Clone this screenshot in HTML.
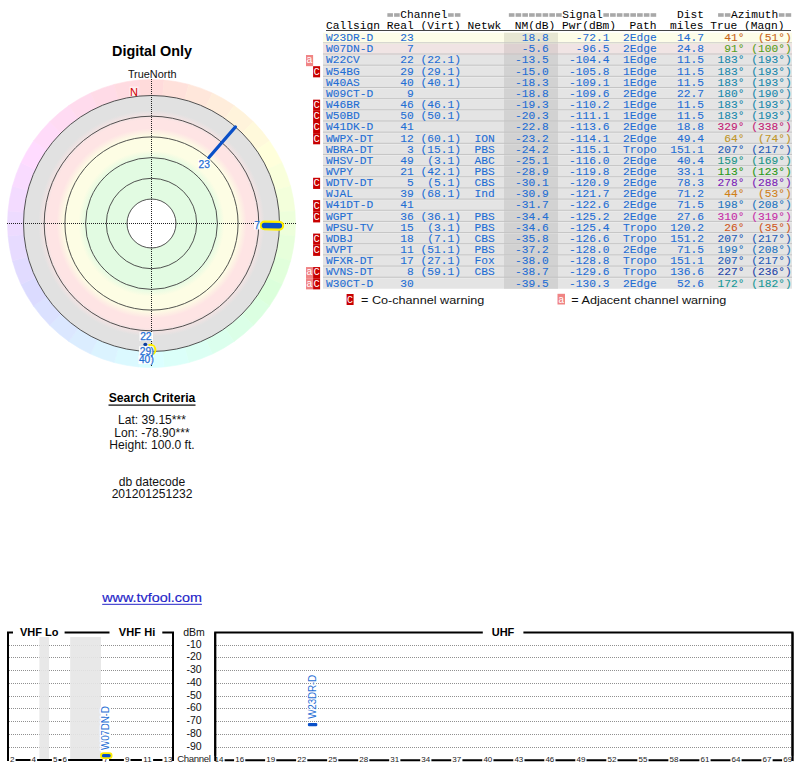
<!DOCTYPE html><html><head><meta charset="utf-8"><style>html,body{margin:0;padding:0;background:#fff;width:800px;height:768px;overflow:hidden}svg{position:absolute;left:0;top:0;display:block}</style></head><body>
<svg width="800" height="768" viewBox="0 0 800 768" style="font-family:'Liberation Sans', sans-serif">
<defs><radialGradient id="rg" gradientUnits="userSpaceOnUse" cx="151.5" cy="223.5" r="128">
<stop offset="0.0000" stop-color="#e2fbe2"/>
<stop offset="0.5078" stop-color="#e2fbe2"/>
<stop offset="0.5703" stop-color="#fdfde4"/>
<stop offset="0.6797" stop-color="#fdfde4"/>
<stop offset="0.7422" stop-color="#fee4e4"/>
<stop offset="0.8125" stop-color="#fee4e4"/>
<stop offset="0.8828" stop-color="#e1e1e1"/>
<stop offset="1.0000" stop-color="#e1e1e1"/>
</radialGradient></defs>
<path d="M138.95,80.05 A144,144 0 0 1 164.05,80.05 L162.66,95.99 A128,128 0 0 0 140.34,95.99Z" fill="#ffdbdb" stroke="#ffdbdb" stroke-width="0.6"/>
<path d="M164.05,80.05 A144,144 0 0 1 188.77,84.41 L184.63,99.86 A128,128 0 0 0 162.66,95.99Z" fill="#ffe1db" stroke="#ffe1db" stroke-width="0.6"/>
<path d="M188.77,84.41 A144,144 0 0 1 212.36,92.99 L205.60,107.49 A128,128 0 0 0 184.63,99.86Z" fill="#ffe7db" stroke="#ffe7db" stroke-width="0.6"/>
<path d="M212.36,92.99 A144,144 0 0 1 234.10,105.54 L224.92,118.65 A128,128 0 0 0 205.60,107.49Z" fill="#ffeddb" stroke="#ffeddb" stroke-width="0.6"/>
<path d="M234.10,105.54 A144,144 0 0 1 253.32,121.68 L242.01,132.99 A128,128 0 0 0 224.92,118.65Z" fill="#fff3db" stroke="#fff3db" stroke-width="0.6"/>
<path d="M253.32,121.68 A144,144 0 0 1 269.46,140.90 L256.35,150.08 A128,128 0 0 0 242.01,132.99Z" fill="#fff9db" stroke="#fff9db" stroke-width="0.6"/>
<path d="M269.46,140.90 A144,144 0 0 1 282.01,162.64 L267.51,169.40 A128,128 0 0 0 256.35,150.08Z" fill="#ffffdb" stroke="#ffffdb" stroke-width="0.6"/>
<path d="M282.01,162.64 A144,144 0 0 1 290.59,186.23 L275.14,190.37 A128,128 0 0 0 267.51,169.40Z" fill="#f9ffdb" stroke="#f9ffdb" stroke-width="0.6"/>
<path d="M290.59,186.23 A144,144 0 0 1 294.95,210.95 L279.01,212.34 A128,128 0 0 0 275.14,190.37Z" fill="#f3ffdb" stroke="#f3ffdb" stroke-width="0.6"/>
<path d="M294.95,210.95 A144,144 0 0 1 294.95,236.05 L279.01,234.66 A128,128 0 0 0 279.01,212.34Z" fill="#edffdb" stroke="#edffdb" stroke-width="0.6"/>
<path d="M294.95,236.05 A144,144 0 0 1 290.59,260.77 L275.14,256.63 A128,128 0 0 0 279.01,234.66Z" fill="#e7ffdb" stroke="#e7ffdb" stroke-width="0.6"/>
<path d="M290.59,260.77 A144,144 0 0 1 282.01,284.36 L267.51,277.60 A128,128 0 0 0 275.14,256.63Z" fill="#e1ffdb" stroke="#e1ffdb" stroke-width="0.6"/>
<path d="M282.01,284.36 A144,144 0 0 1 269.46,306.10 L256.35,296.92 A128,128 0 0 0 267.51,277.60Z" fill="#dbffdb" stroke="#dbffdb" stroke-width="0.6"/>
<path d="M269.46,306.10 A144,144 0 0 1 253.32,325.32 L242.01,314.01 A128,128 0 0 0 256.35,296.92Z" fill="#dbffe1" stroke="#dbffe1" stroke-width="0.6"/>
<path d="M253.32,325.32 A144,144 0 0 1 234.10,341.46 L224.92,328.35 A128,128 0 0 0 242.01,314.01Z" fill="#dbffe7" stroke="#dbffe7" stroke-width="0.6"/>
<path d="M234.10,341.46 A144,144 0 0 1 212.36,354.01 L205.60,339.51 A128,128 0 0 0 224.92,328.35Z" fill="#dbffed" stroke="#dbffed" stroke-width="0.6"/>
<path d="M212.36,354.01 A144,144 0 0 1 188.77,362.59 L184.63,347.14 A128,128 0 0 0 205.60,339.51Z" fill="#dbfff3" stroke="#dbfff3" stroke-width="0.6"/>
<path d="M188.77,362.59 A144,144 0 0 1 164.05,366.95 L162.66,351.01 A128,128 0 0 0 184.63,347.14Z" fill="#dbfff9" stroke="#dbfff9" stroke-width="0.6"/>
<path d="M164.05,366.95 A144,144 0 0 1 138.95,366.95 L140.34,351.01 A128,128 0 0 0 162.66,351.01Z" fill="#dbffff" stroke="#dbffff" stroke-width="0.6"/>
<path d="M138.95,366.95 A144,144 0 0 1 114.23,362.59 L118.37,347.14 A128,128 0 0 0 140.34,351.01Z" fill="#dbf9ff" stroke="#dbf9ff" stroke-width="0.6"/>
<path d="M114.23,362.59 A144,144 0 0 1 90.64,354.01 L97.40,339.51 A128,128 0 0 0 118.37,347.14Z" fill="#dbf3ff" stroke="#dbf3ff" stroke-width="0.6"/>
<path d="M90.64,354.01 A144,144 0 0 1 68.90,341.46 L78.08,328.35 A128,128 0 0 0 97.40,339.51Z" fill="#dbedff" stroke="#dbedff" stroke-width="0.6"/>
<path d="M68.90,341.46 A144,144 0 0 1 49.68,325.32 L60.99,314.01 A128,128 0 0 0 78.08,328.35Z" fill="#dbe7ff" stroke="#dbe7ff" stroke-width="0.6"/>
<path d="M49.68,325.32 A144,144 0 0 1 33.54,306.10 L46.65,296.92 A128,128 0 0 0 60.99,314.01Z" fill="#dbe1ff" stroke="#dbe1ff" stroke-width="0.6"/>
<path d="M33.54,306.10 A144,144 0 0 1 20.99,284.36 L35.49,277.60 A128,128 0 0 0 46.65,296.92Z" fill="#dbdbff" stroke="#dbdbff" stroke-width="0.6"/>
<path d="M20.99,284.36 A144,144 0 0 1 12.41,260.77 L27.86,256.63 A128,128 0 0 0 35.49,277.60Z" fill="#e1dbff" stroke="#e1dbff" stroke-width="0.6"/>
<path d="M12.41,260.77 A144,144 0 0 1 8.05,236.05 L23.99,234.66 A128,128 0 0 0 27.86,256.63Z" fill="#e7dbff" stroke="#e7dbff" stroke-width="0.6"/>
<path d="M8.05,236.05 A144,144 0 0 1 8.05,210.95 L23.99,212.34 A128,128 0 0 0 23.99,234.66Z" fill="#eddbff" stroke="#eddbff" stroke-width="0.6"/>
<path d="M8.05,210.95 A144,144 0 0 1 12.41,186.23 L27.86,190.37 A128,128 0 0 0 23.99,212.34Z" fill="#f3dbff" stroke="#f3dbff" stroke-width="0.6"/>
<path d="M12.41,186.23 A144,144 0 0 1 20.99,162.64 L35.49,169.40 A128,128 0 0 0 27.86,190.37Z" fill="#f9dbff" stroke="#f9dbff" stroke-width="0.6"/>
<path d="M20.99,162.64 A144,144 0 0 1 33.54,140.90 L46.65,150.08 A128,128 0 0 0 35.49,169.40Z" fill="#ffdbff" stroke="#ffdbff" stroke-width="0.6"/>
<path d="M33.54,140.90 A144,144 0 0 1 49.68,121.68 L60.99,132.99 A128,128 0 0 0 46.65,150.08Z" fill="#ffdbf9" stroke="#ffdbf9" stroke-width="0.6"/>
<path d="M49.68,121.68 A144,144 0 0 1 68.90,105.54 L78.08,118.65 A128,128 0 0 0 60.99,132.99Z" fill="#ffdbf3" stroke="#ffdbf3" stroke-width="0.6"/>
<path d="M68.90,105.54 A144,144 0 0 1 90.64,92.99 L97.40,107.49 A128,128 0 0 0 78.08,118.65Z" fill="#ffdbed" stroke="#ffdbed" stroke-width="0.6"/>
<path d="M90.64,92.99 A144,144 0 0 1 114.23,84.41 L118.37,99.86 A128,128 0 0 0 97.40,107.49Z" fill="#ffdbe7" stroke="#ffdbe7" stroke-width="0.6"/>
<path d="M114.23,84.41 A144,144 0 0 1 138.95,80.05 L140.34,95.99 A128,128 0 0 0 118.37,99.86Z" fill="#ffdbe1" stroke="#ffdbe1" stroke-width="0.6"/>
<circle cx="151.5" cy="223.5" r="128" fill="url(#rg)"/>
<circle cx="151.5" cy="223.5" r="24.5" fill="#fff" stroke="#404040" stroke-width="0.9"/>
<circle cx="151.5" cy="223.5" r="45.2" fill="none" stroke="#404040" stroke-width="0.9"/>
<circle cx="151.5" cy="223.5" r="65.9" fill="none" stroke="#404040" stroke-width="0.9"/>
<circle cx="151.5" cy="223.5" r="86.6" fill="none" stroke="#404040" stroke-width="0.9"/>
<circle cx="151.5" cy="223.5" r="107.3" fill="none" stroke="#404040" stroke-width="0.9"/>
<circle cx="151.5" cy="223.5" r="128" fill="none" stroke="#404040" stroke-width="0.9"/>
<line x1="7" y1="223.5" x2="296" y2="223.5" stroke="#222" stroke-width="1" stroke-dasharray="1,1"/>
<line x1="151.5" y1="79" x2="151.5" y2="367" stroke="#222" stroke-width="1" stroke-dasharray="1,1"/>
<text x="152" y="55.6" text-anchor="middle" font-weight="bold" font-size="14.4" fill="#000">Digital Only</text>
<text x="152.2" y="77.8" text-anchor="middle" font-size="10.9" fill="#111">TrueNorth</text>
<rect x="129.5" y="86.5" width="9" height="9.5" fill="#fff" opacity="0.5"/>
<text x="134" y="95.6" text-anchor="middle" font-size="11" fill="#d00000">N</text>
<line x1="208.91" y1="157.46" x2="235.48" y2="126.90" stroke="#0a50c8" stroke-width="3.2" stroke-linecap="round"/>
<rect x="198" y="159.5" width="12.5" height="9" fill="#fff" opacity="0.92"/>
<text x="204.2" y="167.7" text-anchor="middle" font-size="10.2" fill="#1f6ed4" stroke="#1f6ed4" stroke-width="0.25">23</text>
<line x1="264.48" y1="225.47" x2="279.28" y2="225.73" stroke="#ffee00" stroke-width="9.8" stroke-linecap="round"/>
<line x1="264.48" y1="225.47" x2="279.28" y2="225.73" stroke="#0a50c8" stroke-width="5.6" stroke-linecap="round"/>
<rect x="254" y="221" width="6" height="8.5" fill="#fff" opacity="0.92"/>
<text x="257.2" y="228.6" text-anchor="middle" font-size="10.2" fill="#1f6ed4" stroke="#1f6ed4" stroke-width="0.25">7</text>
<path d="M148.5,345.2 A5,5 0 0 1 152.2,354.6" fill="none" stroke="#ffee00" stroke-width="2"/>
<rect x="139.5" y="332" width="13.5" height="9" fill="#fff" opacity="0.92"/>
<text x="145.8" y="340" text-anchor="middle" font-size="10.2" fill="#1f6ed4" stroke="#1f6ed4" stroke-width="0.25">22</text>
<ellipse cx="145.3" cy="344.4" rx="2" ry="1.6" fill="#0a3c9c"/>
<rect x="139" y="346.3" width="14.5" height="9" fill="#fff" opacity="0.92"/>
<text x="145.4" y="354.5" text-anchor="middle" font-size="10.2" fill="#1f6ed4" stroke="#1f6ed4" stroke-width="0.25">29</text>
<rect x="138.5" y="355.5" width="15.5" height="8.5" fill="#fff" opacity="0.92"/>
<text x="144.6" y="362.8" text-anchor="middle" font-size="10.2" fill="#1f6ed4" stroke="#1f6ed4" stroke-width="0.25">40</text>
<text x="152.3" y="362.8" text-anchor="middle" font-size="10.2" fill="#1f6ed4" stroke="#1f6ed4" stroke-width="0.25">)</text>
<text x="152.3" y="354.5" text-anchor="middle" font-size="10.2" fill="#1f6ed4" stroke="#1f6ed4" stroke-width="0.25">)</text>
<text x="152" y="401.9" text-anchor="middle" font-weight="bold" font-size="12.2" fill="#000">Search Criteria</text>
<rect x="108.5" y="404.5" width="87" height="1.2" fill="#000"/>
<text x="152" y="423.5" text-anchor="middle" font-size="12.1" fill="#111">Lat: 39.15***</text>
<text x="152" y="436.6" text-anchor="middle" font-size="12.1" fill="#111">Lon: -78.90***</text>
<text x="152" y="448.9" text-anchor="middle" font-size="12.1" fill="#111">Height: 100.0 ft.</text>
<text x="152" y="486" text-anchor="middle" font-size="12.1" fill="#111">db datecode</text>
<text x="152" y="497.6" text-anchor="middle" font-size="12.1" fill="#111">201201251232</text>
<text x="102.2" y="602" font-size="12.4" fill="#2424c8" stroke="#2424c8" stroke-width="0.15" transform="translate(102.2 0) scale(1.16 1) translate(-102.2 0)">www.tvfool.com</text>
<rect x="102.2" y="603.8" width="99.7" height="1" fill="#2424c8"/>
<g font-family='"Liberation Mono", monospace' font-size="11.25" stroke-width="0.1">
<text x="400.25" y="18" fill="#000" transform="translate(0 18) scale(1 1.03) translate(0 -18)">Channel</text>
<text x="562.25" y="18" fill="#000" transform="translate(0 18) scale(1 1.03) translate(0 -18)">Signal</text>
<text x="677.0" y="18" fill="#000" transform="translate(0 18) scale(1 1.03) translate(0 -18)">Dist</text>
<text x="731.0" y="18" fill="#000" transform="translate(0 18) scale(1 1.03) translate(0 -18)">Azimuth</text>
<rect x="387.35" y="13.2" width="5.6" height="3.6" fill="#a8a8a8"/>
<rect x="394.10" y="13.2" width="5.6" height="3.6" fill="#a8a8a8"/>
<rect x="448.10" y="13.2" width="5.6" height="3.6" fill="#a8a8a8"/>
<rect x="454.85" y="13.2" width="5.6" height="3.6" fill="#a8a8a8"/>
<rect x="508.85" y="13.2" width="5.6" height="3.6" fill="#a8a8a8"/>
<rect x="515.60" y="13.2" width="5.6" height="3.6" fill="#a8a8a8"/>
<rect x="522.35" y="13.2" width="5.6" height="3.6" fill="#a8a8a8"/>
<rect x="529.10" y="13.2" width="5.6" height="3.6" fill="#a8a8a8"/>
<rect x="535.85" y="13.2" width="5.6" height="3.6" fill="#a8a8a8"/>
<rect x="542.60" y="13.2" width="5.6" height="3.6" fill="#a8a8a8"/>
<rect x="549.35" y="13.2" width="5.6" height="3.6" fill="#a8a8a8"/>
<rect x="556.10" y="13.2" width="5.6" height="3.6" fill="#a8a8a8"/>
<rect x="603.35" y="13.2" width="5.6" height="3.6" fill="#a8a8a8"/>
<rect x="610.10" y="13.2" width="5.6" height="3.6" fill="#a8a8a8"/>
<rect x="616.85" y="13.2" width="5.6" height="3.6" fill="#a8a8a8"/>
<rect x="623.60" y="13.2" width="5.6" height="3.6" fill="#a8a8a8"/>
<rect x="630.35" y="13.2" width="5.6" height="3.6" fill="#a8a8a8"/>
<rect x="637.10" y="13.2" width="5.6" height="3.6" fill="#a8a8a8"/>
<rect x="643.85" y="13.2" width="5.6" height="3.6" fill="#a8a8a8"/>
<rect x="650.60" y="13.2" width="5.6" height="3.6" fill="#a8a8a8"/>
<rect x="718.10" y="13.2" width="5.6" height="3.6" fill="#a8a8a8"/>
<rect x="724.85" y="13.2" width="5.6" height="3.6" fill="#a8a8a8"/>
<rect x="778.85" y="13.2" width="5.6" height="3.6" fill="#a8a8a8"/>
<rect x="785.60" y="13.2" width="5.6" height="3.6" fill="#a8a8a8"/>
<text x="326.0" y="29" fill="#000" xml:space="preserve" transform="translate(0 29) scale(1 1.03) translate(0 -29)">Callsign Real (Virt) Netwk  NM(dB) Pwr(dBm)  Path  miles True (Magn)</text>
<rect x="326" y="30" width="465" height="1" fill="#444"/>
<rect x="323" y="32.70" width="469" height="11.16" fill="#fdfde8"/>
<rect x="504" y="32.70" width="54" height="11.16" fill="#e6e6d2"/>
<rect x="323" y="42.34" width="469" height="1" fill="#c4c4c4"/>
<text y="41.10" fill="#1f6ed4" stroke="#1f6ed4" transform="translate(0 41.10) scale(1 1.03) translate(0 -41.10)"><tspan x="326.0">W23DR-D</tspan><tspan x="413.75" text-anchor="end">23</tspan><tspan x="548.75" text-anchor="end">18.8</tspan><tspan x="609.5" text-anchor="end">-72.1</tspan><tspan x="623.0">2Edge</tspan><tspan x="704.0" text-anchor="end">14.7</tspan></text>
<text y="41.10" fill="#c8661a" stroke="#c8661a" transform="translate(0 41.10) scale(1 1.03) translate(0 -41.10)"><tspan x="744.5" text-anchor="end">41°</tspan><tspan x="791.75" text-anchor="end">(51°)</tspan></text>
<rect x="323" y="43.86" width="469" height="11.16" fill="#f0e4e4"/>
<rect x="504" y="43.86" width="54" height="11.16" fill="#ddd1d1"/>
<rect x="323" y="53.50" width="469" height="1" fill="#c4c4c4"/>
<text y="52.26" fill="#1f6ed4" stroke="#1f6ed4" transform="translate(0 52.26) scale(1 1.03) translate(0 -52.26)"><tspan x="326.0">W07DN-D</tspan><tspan x="413.75" text-anchor="end">7</tspan><tspan x="548.75" text-anchor="end">-5.6</tspan><tspan x="609.5" text-anchor="end">-96.5</tspan><tspan x="623.0">2Edge</tspan><tspan x="704.0" text-anchor="end">24.8</tspan></text>
<text y="52.26" fill="#58a01a" stroke="#58a01a" transform="translate(0 52.26) scale(1 1.03) translate(0 -52.26)"><tspan x="744.5" text-anchor="end">91°</tspan><tspan x="791.75" text-anchor="end">(100°)</tspan></text>
<rect x="323" y="55.02" width="469" height="11.16" fill="#e4e4e4"/>
<rect x="504" y="55.02" width="54" height="11.16" fill="#d2d2d2"/>
<rect x="323" y="64.66" width="469" height="1" fill="#c4c4c4"/>
<rect x="306" y="55.02" width="7.1" height="11.16" fill="#f08484"/>
<text x="309.5" y="63.42" text-anchor="middle" fill="#fff" font-size="10.5">a</text>
<text y="63.42" fill="#1f6ed4" stroke="#1f6ed4" transform="translate(0 63.42) scale(1 1.03) translate(0 -63.42)"><tspan x="326.0">W22CV</tspan><tspan x="413.75" text-anchor="end">22</tspan><tspan x="461.0" text-anchor="end">(22.1)</tspan><tspan x="548.75" text-anchor="end">-13.5</tspan><tspan x="609.5" text-anchor="end">-104.4</tspan><tspan x="623.0">1Edge</tspan><tspan x="704.0" text-anchor="end">11.5</tspan></text>
<text y="63.42" fill="#1888ac" stroke="#1888ac" transform="translate(0 63.42) scale(1 1.03) translate(0 -63.42)"><tspan x="744.5" text-anchor="end">183°</tspan><tspan x="791.75" text-anchor="end">(193°)</tspan></text>
<rect x="323" y="66.18" width="469" height="11.16" fill="#e4e4e4"/>
<rect x="504" y="66.18" width="54" height="11.16" fill="#d2d2d2"/>
<rect x="323" y="75.82" width="469" height="1" fill="#c4c4c4"/>
<rect x="313.1" y="66.18" width="7" height="11.16" fill="#c80000"/>
<text x="316.6" y="74.58" text-anchor="middle" fill="#fff" font-size="10.5">C</text>
<text y="74.58" fill="#1f6ed4" stroke="#1f6ed4" transform="translate(0 74.58) scale(1 1.03) translate(0 -74.58)"><tspan x="326.0">W54BG</tspan><tspan x="413.75" text-anchor="end">29</tspan><tspan x="461.0" text-anchor="end">(29.1)</tspan><tspan x="548.75" text-anchor="end">-15.0</tspan><tspan x="609.5" text-anchor="end">-105.8</tspan><tspan x="623.0">1Edge</tspan><tspan x="704.0" text-anchor="end">11.5</tspan></text>
<text y="74.58" fill="#1888ac" stroke="#1888ac" transform="translate(0 74.58) scale(1 1.03) translate(0 -74.58)"><tspan x="744.5" text-anchor="end">183°</tspan><tspan x="791.75" text-anchor="end">(193°)</tspan></text>
<rect x="323" y="77.34" width="469" height="11.16" fill="#e4e4e4"/>
<rect x="504" y="77.34" width="54" height="11.16" fill="#d2d2d2"/>
<rect x="323" y="86.98" width="469" height="1" fill="#c4c4c4"/>
<text y="85.74" fill="#1f6ed4" stroke="#1f6ed4" transform="translate(0 85.74) scale(1 1.03) translate(0 -85.74)"><tspan x="326.0">W40AS</tspan><tspan x="413.75" text-anchor="end">40</tspan><tspan x="461.0" text-anchor="end">(40.1)</tspan><tspan x="548.75" text-anchor="end">-18.3</tspan><tspan x="609.5" text-anchor="end">-109.1</tspan><tspan x="623.0">1Edge</tspan><tspan x="704.0" text-anchor="end">11.5</tspan></text>
<text y="85.74" fill="#1888ac" stroke="#1888ac" transform="translate(0 85.74) scale(1 1.03) translate(0 -85.74)"><tspan x="744.5" text-anchor="end">183°</tspan><tspan x="791.75" text-anchor="end">(193°)</tspan></text>
<rect x="323" y="88.50" width="469" height="11.16" fill="#e4e4e4"/>
<rect x="504" y="88.50" width="54" height="11.16" fill="#d2d2d2"/>
<rect x="323" y="98.14" width="469" height="1" fill="#c4c4c4"/>
<text y="96.90" fill="#1f6ed4" stroke="#1f6ed4" transform="translate(0 96.90) scale(1 1.03) translate(0 -96.90)"><tspan x="326.0">W09CT-D</tspan><tspan x="413.75" text-anchor="end">9</tspan><tspan x="548.75" text-anchor="end">-18.8</tspan><tspan x="609.5" text-anchor="end">-109.6</tspan><tspan x="623.0">2Edge</tspan><tspan x="704.0" text-anchor="end">22.7</tspan></text>
<text y="96.90" fill="#1888ac" stroke="#1888ac" transform="translate(0 96.90) scale(1 1.03) translate(0 -96.90)"><tspan x="744.5" text-anchor="end">180°</tspan><tspan x="791.75" text-anchor="end">(190°)</tspan></text>
<rect x="323" y="99.66" width="469" height="11.16" fill="#e4e4e4"/>
<rect x="504" y="99.66" width="54" height="11.16" fill="#d2d2d2"/>
<rect x="323" y="109.30" width="469" height="1" fill="#c4c4c4"/>
<rect x="313.1" y="99.66" width="7" height="11.16" fill="#c80000"/>
<text x="316.6" y="108.06" text-anchor="middle" fill="#fff" font-size="10.5">C</text>
<text y="108.06" fill="#1f6ed4" stroke="#1f6ed4" transform="translate(0 108.06) scale(1 1.03) translate(0 -108.06)"><tspan x="326.0">W46BR</tspan><tspan x="413.75" text-anchor="end">46</tspan><tspan x="461.0" text-anchor="end">(46.1)</tspan><tspan x="548.75" text-anchor="end">-19.3</tspan><tspan x="609.5" text-anchor="end">-110.2</tspan><tspan x="623.0">1Edge</tspan><tspan x="704.0" text-anchor="end">11.5</tspan></text>
<text y="108.06" fill="#1888ac" stroke="#1888ac" transform="translate(0 108.06) scale(1 1.03) translate(0 -108.06)"><tspan x="744.5" text-anchor="end">183°</tspan><tspan x="791.75" text-anchor="end">(193°)</tspan></text>
<rect x="323" y="110.82" width="469" height="11.16" fill="#e4e4e4"/>
<rect x="504" y="110.82" width="54" height="11.16" fill="#d2d2d2"/>
<rect x="323" y="120.46" width="469" height="1" fill="#c4c4c4"/>
<rect x="313.1" y="110.82" width="7" height="11.16" fill="#c80000"/>
<text x="316.6" y="119.22" text-anchor="middle" fill="#fff" font-size="10.5">C</text>
<text y="119.22" fill="#1f6ed4" stroke="#1f6ed4" transform="translate(0 119.22) scale(1 1.03) translate(0 -119.22)"><tspan x="326.0">W50BD</tspan><tspan x="413.75" text-anchor="end">50</tspan><tspan x="461.0" text-anchor="end">(50.1)</tspan><tspan x="548.75" text-anchor="end">-20.3</tspan><tspan x="609.5" text-anchor="end">-111.1</tspan><tspan x="623.0">1Edge</tspan><tspan x="704.0" text-anchor="end">11.5</tspan></text>
<text y="119.22" fill="#1888ac" stroke="#1888ac" transform="translate(0 119.22) scale(1 1.03) translate(0 -119.22)"><tspan x="744.5" text-anchor="end">183°</tspan><tspan x="791.75" text-anchor="end">(193°)</tspan></text>
<rect x="323" y="121.98" width="469" height="11.16" fill="#e4e4e4"/>
<rect x="504" y="121.98" width="54" height="11.16" fill="#d2d2d2"/>
<rect x="323" y="131.62" width="469" height="1" fill="#c4c4c4"/>
<rect x="313.1" y="121.98" width="7" height="11.16" fill="#c80000"/>
<text x="316.6" y="130.38" text-anchor="middle" fill="#fff" font-size="10.5">C</text>
<text y="130.38" fill="#1f6ed4" stroke="#1f6ed4" transform="translate(0 130.38) scale(1 1.03) translate(0 -130.38)"><tspan x="326.0">W41DK-D</tspan><tspan x="413.75" text-anchor="end">41</tspan><tspan x="548.75" text-anchor="end">-22.8</tspan><tspan x="609.5" text-anchor="end">-113.6</tspan><tspan x="623.0">2Edge</tspan><tspan x="704.0" text-anchor="end">18.8</tspan></text>
<text y="130.38" fill="#c41c74" stroke="#c41c74" transform="translate(0 130.38) scale(1 1.03) translate(0 -130.38)"><tspan x="744.5" text-anchor="end">329°</tspan><tspan x="791.75" text-anchor="end">(338°)</tspan></text>
<rect x="323" y="133.14" width="469" height="11.16" fill="#e4e4e4"/>
<rect x="504" y="133.14" width="54" height="11.16" fill="#d2d2d2"/>
<rect x="323" y="142.78" width="469" height="1" fill="#c4c4c4"/>
<rect x="313.1" y="133.14" width="7" height="11.16" fill="#c80000"/>
<text x="316.6" y="141.54" text-anchor="middle" fill="#fff" font-size="10.5">C</text>
<text y="141.54" fill="#1f6ed4" stroke="#1f6ed4" transform="translate(0 141.54) scale(1 1.03) translate(0 -141.54)"><tspan x="326.0">WWPX-DT</tspan><tspan x="413.75" text-anchor="end">12</tspan><tspan x="461.0" text-anchor="end">(60.1)</tspan><tspan x="474.5">ION</tspan><tspan x="548.75" text-anchor="end">-23.2</tspan><tspan x="609.5" text-anchor="end">-114.1</tspan><tspan x="623.0">2Edge</tspan><tspan x="704.0" text-anchor="end">49.4</tspan></text>
<text y="141.54" fill="#c09628" stroke="#c09628" transform="translate(0 141.54) scale(1 1.03) translate(0 -141.54)"><tspan x="744.5" text-anchor="end">64°</tspan><tspan x="791.75" text-anchor="end">(74°)</tspan></text>
<rect x="323" y="144.30" width="469" height="11.16" fill="#e4e4e4"/>
<rect x="504" y="144.30" width="54" height="11.16" fill="#d2d2d2"/>
<rect x="323" y="153.94" width="469" height="1" fill="#c4c4c4"/>
<text y="152.70" fill="#1f6ed4" stroke="#1f6ed4" transform="translate(0 152.70) scale(1 1.03) translate(0 -152.70)"><tspan x="326.0">WBRA-DT</tspan><tspan x="413.75" text-anchor="end">3</tspan><tspan x="461.0" text-anchor="end">(15.1)</tspan><tspan x="474.5">PBS</tspan><tspan x="548.75" text-anchor="end">-24.2</tspan><tspan x="609.5" text-anchor="end">-115.1</tspan><tspan x="623.0">Tropo</tspan><tspan x="704.0" text-anchor="end">151.1</tspan></text>
<text y="152.70" fill="#1e5cb8" stroke="#1e5cb8" transform="translate(0 152.70) scale(1 1.03) translate(0 -152.70)"><tspan x="744.5" text-anchor="end">207°</tspan><tspan x="791.75" text-anchor="end">(217°)</tspan></text>
<rect x="323" y="155.46" width="469" height="11.16" fill="#e4e4e4"/>
<rect x="504" y="155.46" width="54" height="11.16" fill="#d2d2d2"/>
<rect x="323" y="165.10" width="469" height="1" fill="#c4c4c4"/>
<text y="163.86" fill="#1f6ed4" stroke="#1f6ed4" transform="translate(0 163.86) scale(1 1.03) translate(0 -163.86)"><tspan x="326.0">WHSV-DT</tspan><tspan x="413.75" text-anchor="end">49</tspan><tspan x="461.0" text-anchor="end">(3.1)</tspan><tspan x="474.5">ABC</tspan><tspan x="548.75" text-anchor="end">-25.1</tspan><tspan x="609.5" text-anchor="end">-116.0</tspan><tspan x="623.0">2Edge</tspan><tspan x="704.0" text-anchor="end">40.4</tspan></text>
<text y="163.86" fill="#1a9488" stroke="#1a9488" transform="translate(0 163.86) scale(1 1.03) translate(0 -163.86)"><tspan x="744.5" text-anchor="end">159°</tspan><tspan x="791.75" text-anchor="end">(169°)</tspan></text>
<rect x="323" y="166.62" width="469" height="11.16" fill="#e4e4e4"/>
<rect x="504" y="166.62" width="54" height="11.16" fill="#d2d2d2"/>
<rect x="323" y="176.26" width="469" height="1" fill="#c4c4c4"/>
<text y="175.02" fill="#1f6ed4" stroke="#1f6ed4" transform="translate(0 175.02) scale(1 1.03) translate(0 -175.02)"><tspan x="326.0">WVPY</tspan><tspan x="413.75" text-anchor="end">21</tspan><tspan x="461.0" text-anchor="end">(42.1)</tspan><tspan x="474.5">PBS</tspan><tspan x="548.75" text-anchor="end">-28.9</tspan><tspan x="609.5" text-anchor="end">-119.8</tspan><tspan x="623.0">2Edge</tspan><tspan x="704.0" text-anchor="end">33.1</tspan></text>
<text y="175.02" fill="#289818" stroke="#289818" transform="translate(0 175.02) scale(1 1.03) translate(0 -175.02)"><tspan x="744.5" text-anchor="end">113°</tspan><tspan x="791.75" text-anchor="end">(123°)</tspan></text>
<rect x="323" y="177.78" width="469" height="11.16" fill="#e4e4e4"/>
<rect x="504" y="177.78" width="54" height="11.16" fill="#d2d2d2"/>
<rect x="323" y="187.42" width="469" height="1" fill="#c4c4c4"/>
<rect x="313.1" y="177.78" width="7" height="11.16" fill="#c80000"/>
<text x="316.6" y="186.18" text-anchor="middle" fill="#fff" font-size="10.5">C</text>
<text y="186.18" fill="#1f6ed4" stroke="#1f6ed4" transform="translate(0 186.18) scale(1 1.03) translate(0 -186.18)"><tspan x="326.0">WDTV-DT</tspan><tspan x="413.75" text-anchor="end">5</tspan><tspan x="461.0" text-anchor="end">(5.1)</tspan><tspan x="474.5">CBS</tspan><tspan x="548.75" text-anchor="end">-30.1</tspan><tspan x="609.5" text-anchor="end">-120.9</tspan><tspan x="623.0">2Edge</tspan><tspan x="704.0" text-anchor="end">78.3</tspan></text>
<text y="186.18" fill="#7a1cb8" stroke="#7a1cb8" transform="translate(0 186.18) scale(1 1.03) translate(0 -186.18)"><tspan x="744.5" text-anchor="end">278°</tspan><tspan x="791.75" text-anchor="end">(288°)</tspan></text>
<rect x="323" y="188.94" width="469" height="11.16" fill="#e4e4e4"/>
<rect x="504" y="188.94" width="54" height="11.16" fill="#d2d2d2"/>
<rect x="323" y="198.58" width="469" height="1" fill="#c4c4c4"/>
<text y="197.34" fill="#1f6ed4" stroke="#1f6ed4" transform="translate(0 197.34) scale(1 1.03) translate(0 -197.34)"><tspan x="326.0">WJAL</tspan><tspan x="413.75" text-anchor="end">39</tspan><tspan x="461.0" text-anchor="end">(68.1)</tspan><tspan x="474.5">Ind</tspan><tspan x="548.75" text-anchor="end">-30.9</tspan><tspan x="609.5" text-anchor="end">-121.7</tspan><tspan x="623.0">2Edge</tspan><tspan x="704.0" text-anchor="end">71.2</tspan></text>
<text y="197.34" fill="#d08018" stroke="#d08018" transform="translate(0 197.34) scale(1 1.03) translate(0 -197.34)"><tspan x="744.5" text-anchor="end">44°</tspan><tspan x="791.75" text-anchor="end">(53°)</tspan></text>
<rect x="323" y="200.10" width="469" height="11.16" fill="#e4e4e4"/>
<rect x="504" y="200.10" width="54" height="11.16" fill="#d2d2d2"/>
<rect x="323" y="209.74" width="469" height="1" fill="#c4c4c4"/>
<rect x="313.1" y="200.10" width="7" height="11.16" fill="#c80000"/>
<text x="316.6" y="208.50" text-anchor="middle" fill="#fff" font-size="10.5">C</text>
<text y="208.50" fill="#1f6ed4" stroke="#1f6ed4" transform="translate(0 208.50) scale(1 1.03) translate(0 -208.50)"><tspan x="326.0">W41DT-D</tspan><tspan x="413.75" text-anchor="end">41</tspan><tspan x="548.75" text-anchor="end">-31.7</tspan><tspan x="609.5" text-anchor="end">-122.6</tspan><tspan x="623.0">2Edge</tspan><tspan x="704.0" text-anchor="end">71.5</tspan></text>
<text y="208.50" fill="#1e74c0" stroke="#1e74c0" transform="translate(0 208.50) scale(1 1.03) translate(0 -208.50)"><tspan x="744.5" text-anchor="end">198°</tspan><tspan x="791.75" text-anchor="end">(208°)</tspan></text>
<rect x="323" y="211.26" width="469" height="11.16" fill="#e4e4e4"/>
<rect x="504" y="211.26" width="54" height="11.16" fill="#d2d2d2"/>
<rect x="323" y="220.90" width="469" height="1" fill="#c4c4c4"/>
<rect x="313.1" y="211.26" width="7" height="11.16" fill="#c80000"/>
<text x="316.6" y="219.66" text-anchor="middle" fill="#fff" font-size="10.5">C</text>
<text y="219.66" fill="#1f6ed4" stroke="#1f6ed4" transform="translate(0 219.66) scale(1 1.03) translate(0 -219.66)"><tspan x="326.0">WGPT</tspan><tspan x="413.75" text-anchor="end">36</tspan><tspan x="461.0" text-anchor="end">(36.1)</tspan><tspan x="474.5">PBS</tspan><tspan x="548.75" text-anchor="end">-34.4</tspan><tspan x="609.5" text-anchor="end">-125.2</tspan><tspan x="623.0">2Edge</tspan><tspan x="704.0" text-anchor="end">27.6</tspan></text>
<text y="219.66" fill="#c82ca8" stroke="#c82ca8" transform="translate(0 219.66) scale(1 1.03) translate(0 -219.66)"><tspan x="744.5" text-anchor="end">310°</tspan><tspan x="791.75" text-anchor="end">(319°)</tspan></text>
<rect x="323" y="222.42" width="469" height="11.16" fill="#e4e4e4"/>
<rect x="504" y="222.42" width="54" height="11.16" fill="#d2d2d2"/>
<rect x="323" y="232.06" width="469" height="1" fill="#c4c4c4"/>
<text y="230.82" fill="#1f6ed4" stroke="#1f6ed4" transform="translate(0 230.82) scale(1 1.03) translate(0 -230.82)"><tspan x="326.0">WPSU-TV</tspan><tspan x="413.75" text-anchor="end">15</tspan><tspan x="461.0" text-anchor="end">(3.1)</tspan><tspan x="474.5">PBS</tspan><tspan x="548.75" text-anchor="end">-34.6</tspan><tspan x="609.5" text-anchor="end">-125.4</tspan><tspan x="623.0">Tropo</tspan><tspan x="704.0" text-anchor="end">120.2</tspan></text>
<text y="230.82" fill="#d0581c" stroke="#d0581c" transform="translate(0 230.82) scale(1 1.03) translate(0 -230.82)"><tspan x="744.5" text-anchor="end">26°</tspan><tspan x="791.75" text-anchor="end">(35°)</tspan></text>
<rect x="323" y="233.58" width="469" height="11.16" fill="#e4e4e4"/>
<rect x="504" y="233.58" width="54" height="11.16" fill="#d2d2d2"/>
<rect x="323" y="243.22" width="469" height="1" fill="#c4c4c4"/>
<rect x="313.1" y="233.58" width="7" height="11.16" fill="#c80000"/>
<text x="316.6" y="241.98" text-anchor="middle" fill="#fff" font-size="10.5">C</text>
<text y="241.98" fill="#1f6ed4" stroke="#1f6ed4" transform="translate(0 241.98) scale(1 1.03) translate(0 -241.98)"><tspan x="326.0">WDBJ</tspan><tspan x="413.75" text-anchor="end">18</tspan><tspan x="461.0" text-anchor="end">(7.1)</tspan><tspan x="474.5">CBS</tspan><tspan x="548.75" text-anchor="end">-35.8</tspan><tspan x="609.5" text-anchor="end">-126.6</tspan><tspan x="623.0">Tropo</tspan><tspan x="704.0" text-anchor="end">151.2</tspan></text>
<text y="241.98" fill="#1e5cb8" stroke="#1e5cb8" transform="translate(0 241.98) scale(1 1.03) translate(0 -241.98)"><tspan x="744.5" text-anchor="end">207°</tspan><tspan x="791.75" text-anchor="end">(217°)</tspan></text>
<rect x="323" y="244.74" width="469" height="11.16" fill="#e4e4e4"/>
<rect x="504" y="244.74" width="54" height="11.16" fill="#d2d2d2"/>
<rect x="323" y="254.38" width="469" height="1" fill="#c4c4c4"/>
<rect x="313.1" y="244.74" width="7" height="11.16" fill="#c80000"/>
<text x="316.6" y="253.14" text-anchor="middle" fill="#fff" font-size="10.5">C</text>
<text y="253.14" fill="#1f6ed4" stroke="#1f6ed4" transform="translate(0 253.14) scale(1 1.03) translate(0 -253.14)"><tspan x="326.0">WVPT</tspan><tspan x="413.75" text-anchor="end">11</tspan><tspan x="461.0" text-anchor="end">(51.1)</tspan><tspan x="474.5">PBS</tspan><tspan x="548.75" text-anchor="end">-37.2</tspan><tspan x="609.5" text-anchor="end">-128.0</tspan><tspan x="623.0">2Edge</tspan><tspan x="704.0" text-anchor="end">71.5</tspan></text>
<text y="253.14" fill="#1e74c0" stroke="#1e74c0" transform="translate(0 253.14) scale(1 1.03) translate(0 -253.14)"><tspan x="744.5" text-anchor="end">199°</tspan><tspan x="791.75" text-anchor="end">(208°)</tspan></text>
<rect x="323" y="255.90" width="469" height="11.16" fill="#e4e4e4"/>
<rect x="504" y="255.90" width="54" height="11.16" fill="#d2d2d2"/>
<rect x="323" y="265.54" width="469" height="1" fill="#c4c4c4"/>
<text y="264.30" fill="#1f6ed4" stroke="#1f6ed4" transform="translate(0 264.30) scale(1 1.03) translate(0 -264.30)"><tspan x="326.0">WFXR-DT</tspan><tspan x="413.75" text-anchor="end">17</tspan><tspan x="461.0" text-anchor="end">(27.1)</tspan><tspan x="474.5">Fox</tspan><tspan x="548.75" text-anchor="end">-38.0</tspan><tspan x="609.5" text-anchor="end">-128.8</tspan><tspan x="623.0">Tropo</tspan><tspan x="704.0" text-anchor="end">151.1</tspan></text>
<text y="264.30" fill="#1e5cb8" stroke="#1e5cb8" transform="translate(0 264.30) scale(1 1.03) translate(0 -264.30)"><tspan x="744.5" text-anchor="end">207°</tspan><tspan x="791.75" text-anchor="end">(217°)</tspan></text>
<rect x="323" y="267.06" width="469" height="11.16" fill="#e4e4e4"/>
<rect x="504" y="267.06" width="54" height="11.16" fill="#d2d2d2"/>
<rect x="323" y="276.70" width="469" height="1" fill="#c4c4c4"/>
<rect x="306" y="267.06" width="7.1" height="11.16" fill="#f08484"/>
<text x="309.5" y="275.46" text-anchor="middle" fill="#fff" font-size="10.5">a</text>
<rect x="313.1" y="267.06" width="7" height="11.16" fill="#c80000"/>
<text x="316.6" y="275.46" text-anchor="middle" fill="#fff" font-size="10.5">C</text>
<text y="275.46" fill="#1f6ed4" stroke="#1f6ed4" transform="translate(0 275.46) scale(1 1.03) translate(0 -275.46)"><tspan x="326.0">WVNS-DT</tspan><tspan x="413.75" text-anchor="end">8</tspan><tspan x="461.0" text-anchor="end">(59.1)</tspan><tspan x="474.5">CBS</tspan><tspan x="548.75" text-anchor="end">-38.7</tspan><tspan x="609.5" text-anchor="end">-129.6</tspan><tspan x="623.0">Tropo</tspan><tspan x="704.0" text-anchor="end">136.6</tspan></text>
<text y="275.46" fill="#2444a8" stroke="#2444a8" transform="translate(0 275.46) scale(1 1.03) translate(0 -275.46)"><tspan x="744.5" text-anchor="end">227°</tspan><tspan x="791.75" text-anchor="end">(236°)</tspan></text>
<rect x="323" y="278.22" width="469" height="10.50" fill="#e4e4e4"/>
<rect x="504" y="278.22" width="54" height="10.50" fill="#d2d2d2"/>
<rect x="306" y="278.22" width="7.1" height="11.16" fill="#f08484"/>
<text x="309.5" y="286.62" text-anchor="middle" fill="#fff" font-size="10.5">a</text>
<rect x="313.1" y="278.22" width="7" height="11.16" fill="#c80000"/>
<text x="316.6" y="286.62" text-anchor="middle" fill="#fff" font-size="10.5">C</text>
<text y="286.62" fill="#1f6ed4" stroke="#1f6ed4" transform="translate(0 286.62) scale(1 1.03) translate(0 -286.62)"><tspan x="326.0">W30CT-D</tspan><tspan x="413.75" text-anchor="end">30</tspan><tspan x="548.75" text-anchor="end">-39.5</tspan><tspan x="609.5" text-anchor="end">-130.3</tspan><tspan x="623.0">2Edge</tspan><tspan x="704.0" text-anchor="end">52.6</tspan></text>
<text y="286.62" fill="#169898" stroke="#169898" transform="translate(0 286.62) scale(1 1.03) translate(0 -286.62)"><tspan x="744.5" text-anchor="end">172°</tspan><tspan x="791.75" text-anchor="end">(182°)</tspan></text>
</g>
<rect x="346.6" y="294" width="7" height="11" fill="#c80000"/>
<text x="350.1" y="303" text-anchor="middle" fill="#fff" font-size="10" font-family='"Liberation Mono"'>C</text>
<text x="361" y="304.4" font-size="11.5" fill="#111" transform="translate(361 0) scale(1.1 1) translate(-361 0)">= Co-channel warning</text>
<rect x="557.5" y="293.8" width="7.5" height="10.7" fill="#f08484"/>
<text x="561.2" y="302.6" text-anchor="middle" fill="#fff" font-size="10" font-family='"Liberation Mono"'>a</text>
<text x="571.3" y="303.8" font-size="11.5" fill="#111" transform="translate(571.3 0) scale(1.1 1) translate(-571.3 0)">= Adjacent channel warning</text>
<line x1="9" y1="645.50" x2="172" y2="645.50" stroke="#909090" stroke-width="1" stroke-dasharray="1,1"/>
<line x1="216" y1="645.50" x2="791" y2="645.50" stroke="#909090" stroke-width="1" stroke-dasharray="1,1"/>
<line x1="9" y1="657.50" x2="172" y2="657.50" stroke="#909090" stroke-width="1" stroke-dasharray="1,1"/>
<line x1="216" y1="657.50" x2="791" y2="657.50" stroke="#909090" stroke-width="1" stroke-dasharray="1,1"/>
<line x1="9" y1="670.50" x2="172" y2="670.50" stroke="#909090" stroke-width="1" stroke-dasharray="1,1"/>
<line x1="216" y1="670.50" x2="791" y2="670.50" stroke="#909090" stroke-width="1" stroke-dasharray="1,1"/>
<line x1="9" y1="683.50" x2="172" y2="683.50" stroke="#909090" stroke-width="1" stroke-dasharray="1,1"/>
<line x1="216" y1="683.50" x2="791" y2="683.50" stroke="#909090" stroke-width="1" stroke-dasharray="1,1"/>
<line x1="9" y1="696.50" x2="172" y2="696.50" stroke="#909090" stroke-width="1" stroke-dasharray="1,1"/>
<line x1="216" y1="696.50" x2="791" y2="696.50" stroke="#909090" stroke-width="1" stroke-dasharray="1,1"/>
<line x1="9" y1="708.50" x2="172" y2="708.50" stroke="#909090" stroke-width="1" stroke-dasharray="1,1"/>
<line x1="216" y1="708.50" x2="791" y2="708.50" stroke="#909090" stroke-width="1" stroke-dasharray="1,1"/>
<line x1="9" y1="721.50" x2="172" y2="721.50" stroke="#909090" stroke-width="1" stroke-dasharray="1,1"/>
<line x1="216" y1="721.50" x2="791" y2="721.50" stroke="#909090" stroke-width="1" stroke-dasharray="1,1"/>
<line x1="9" y1="734.50" x2="172" y2="734.50" stroke="#909090" stroke-width="1" stroke-dasharray="1,1"/>
<line x1="216" y1="734.50" x2="791" y2="734.50" stroke="#909090" stroke-width="1" stroke-dasharray="1,1"/>
<line x1="9" y1="747.50" x2="172" y2="747.50" stroke="#909090" stroke-width="1" stroke-dasharray="1,1"/>
<line x1="216" y1="747.50" x2="791" y2="747.50" stroke="#909090" stroke-width="1" stroke-dasharray="1,1"/>
<rect x="39.4" y="637" width="9.7" height="122" fill="#e6e6e6" fill-opacity="0.92"/>
<rect x="70.2" y="637" width="30.8" height="122" fill="#e6e6e6" fill-opacity="0.92"/>
<path d="M13,632.5 H8 V760 H173 V632.5 H162.3" fill="none" stroke="#000" stroke-width="2"/>
<line x1="64.6" y1="632.5" x2="109.5" y2="632.5" stroke="#000" stroke-width="2"/>
<text x="20" y="635.8" font-weight="bold" font-size="11" fill="#000">VHF Lo</text>
<text x="118.8" y="635.8" font-weight="bold" font-size="11" fill="#000" textLength="36.6">VHF Hi</text>
<path d="M482.8,632.5 H215.2 V760.2 H792.5 V632.5 H523.4" fill="none" stroke="#000" stroke-width="2"/>
<text x="503" y="636" text-anchor="middle" font-weight="bold" font-size="11" fill="#000">UHF</text>
<text x="194" y="635.8" text-anchor="middle" font-size="10.5" fill="#111">dBm</text>
<text x="194" y="648.30" text-anchor="middle" font-size="10.5" fill="#111">-10</text>
<text x="194" y="660.30" text-anchor="middle" font-size="10.5" fill="#111">-20</text>
<text x="194" y="673.30" text-anchor="middle" font-size="10.5" fill="#111">-30</text>
<text x="194" y="686.30" text-anchor="middle" font-size="10.5" fill="#111">-40</text>
<text x="194" y="699.30" text-anchor="middle" font-size="10.5" fill="#111">-50</text>
<text x="194" y="711.30" text-anchor="middle" font-size="10.5" fill="#111">-60</text>
<text x="194" y="724.30" text-anchor="middle" font-size="10.5" fill="#111">-70</text>
<text x="194" y="737.30" text-anchor="middle" font-size="10.5" fill="#111">-80</text>
<text x="194" y="750.30" text-anchor="middle" font-size="10.5" fill="#111">-90</text>
<text x="194" y="761.6" text-anchor="middle" font-size="9.6" fill="#222" textLength="33.6">Channel</text>
<rect x="9.00" y="755.8" width="6.60" height="7" fill="#fff"/>
<text x="12.30" y="761.7" text-anchor="middle" font-size="8" fill="#222">2</text>
<rect x="30.50" y="755.8" width="6.60" height="7" fill="#fff"/>
<text x="33.80" y="761.7" text-anchor="middle" font-size="8" fill="#222">4</text>
<rect x="51.90" y="755.8" width="6.60" height="7" fill="#fff"/>
<text x="55.20" y="761.7" text-anchor="middle" font-size="8" fill="#222">5</text>
<rect x="61.50" y="755.8" width="6.60" height="7" fill="#fff"/>
<text x="64.80" y="761.7" text-anchor="middle" font-size="8" fill="#222">6</text>
<rect x="102.50" y="755.8" width="6.60" height="7" fill="#fff"/>
<text x="105.80" y="761.7" text-anchor="middle" font-size="8" fill="#222">7</text>
<rect x="123.90" y="755.8" width="6.60" height="7" fill="#fff"/>
<text x="127.20" y="761.7" text-anchor="middle" font-size="8" fill="#222">9</text>
<rect x="141.90" y="755.8" width="11.20" height="7" fill="#fff"/>
<text x="147.50" y="761.7" text-anchor="middle" font-size="8" fill="#222">11</text>
<rect x="162.40" y="755.8" width="11.20" height="7" fill="#fff"/>
<text x="168.00" y="761.7" text-anchor="middle" font-size="8" fill="#222">13</text>
<rect x="213.40" y="755.8" width="11.20" height="7" fill="#fff"/>
<text x="219.00" y="761.7" text-anchor="middle" font-size="8" fill="#222">14</text>
<rect x="234.08" y="755.8" width="11.20" height="7" fill="#fff"/>
<text x="239.68" y="761.7" text-anchor="middle" font-size="8" fill="#222">16</text>
<rect x="265.10" y="755.8" width="11.20" height="7" fill="#fff"/>
<text x="270.70" y="761.7" text-anchor="middle" font-size="8" fill="#222">19</text>
<rect x="296.12" y="755.8" width="11.20" height="7" fill="#fff"/>
<text x="301.72" y="761.7" text-anchor="middle" font-size="8" fill="#222">22</text>
<rect x="327.14" y="755.8" width="11.20" height="7" fill="#fff"/>
<text x="332.74" y="761.7" text-anchor="middle" font-size="8" fill="#222">25</text>
<rect x="358.16" y="755.8" width="11.20" height="7" fill="#fff"/>
<text x="363.76" y="761.7" text-anchor="middle" font-size="8" fill="#222">28</text>
<rect x="389.18" y="755.8" width="11.20" height="7" fill="#fff"/>
<text x="394.78" y="761.7" text-anchor="middle" font-size="8" fill="#222">31</text>
<rect x="420.20" y="755.8" width="11.20" height="7" fill="#fff"/>
<text x="425.80" y="761.7" text-anchor="middle" font-size="8" fill="#222">34</text>
<rect x="451.22" y="755.8" width="11.20" height="7" fill="#fff"/>
<text x="456.82" y="761.7" text-anchor="middle" font-size="8" fill="#222">37</text>
<rect x="482.24" y="755.8" width="11.20" height="7" fill="#fff"/>
<text x="487.84" y="761.7" text-anchor="middle" font-size="8" fill="#222">40</text>
<rect x="513.26" y="755.8" width="11.20" height="7" fill="#fff"/>
<text x="518.86" y="761.7" text-anchor="middle" font-size="8" fill="#222">43</text>
<rect x="544.28" y="755.8" width="11.20" height="7" fill="#fff"/>
<text x="549.88" y="761.7" text-anchor="middle" font-size="8" fill="#222">46</text>
<rect x="575.30" y="755.8" width="11.20" height="7" fill="#fff"/>
<text x="580.90" y="761.7" text-anchor="middle" font-size="8" fill="#222">49</text>
<rect x="606.32" y="755.8" width="11.20" height="7" fill="#fff"/>
<text x="611.92" y="761.7" text-anchor="middle" font-size="8" fill="#222">52</text>
<rect x="637.34" y="755.8" width="11.20" height="7" fill="#fff"/>
<text x="642.94" y="761.7" text-anchor="middle" font-size="8" fill="#222">55</text>
<rect x="668.36" y="755.8" width="11.20" height="7" fill="#fff"/>
<text x="673.96" y="761.7" text-anchor="middle" font-size="8" fill="#222">58</text>
<rect x="699.38" y="755.8" width="11.20" height="7" fill="#fff"/>
<text x="704.98" y="761.7" text-anchor="middle" font-size="8" fill="#222">61</text>
<rect x="730.40" y="755.8" width="11.20" height="7" fill="#fff"/>
<text x="736.00" y="761.7" text-anchor="middle" font-size="8" fill="#222">64</text>
<rect x="761.42" y="755.8" width="11.20" height="7" fill="#fff"/>
<text x="767.02" y="761.7" text-anchor="middle" font-size="8" fill="#222">67</text>
<rect x="782.10" y="755.8" width="11.20" height="7" fill="#fff"/>
<text x="787.70" y="761.7" text-anchor="middle" font-size="8" fill="#222">69</text>
<line x1="8" y1="632.5" x2="8" y2="761" stroke="#000" stroke-width="2"/>
<line x1="173" y1="632.5" x2="173" y2="761" stroke="#000" stroke-width="2"/>
<line x1="215.2" y1="632.5" x2="215.2" y2="761" stroke="#000" stroke-width="2"/>
<line x1="792.5" y1="632.5" x2="792.5" y2="761" stroke="#000" stroke-width="2"/>
<rect x="101" y="753.2" width="10.6" height="5" rx="2.4" fill="#0a50c8" stroke="#ffee00" stroke-width="1.8"/>
<text transform="translate(109.0 750) rotate(-90)" font-size="10" fill="#1f6ed4" stroke="#fff" stroke-width="2.6" paint-order="stroke" stroke-linejoin="round" textLength="44">W07DN-D</text>
<rect x="307.9" y="722.9" width="9.4" height="3.4" rx="1.2" fill="#0a50c8"/>
<text transform="translate(315.9 718.8) rotate(-90)" font-size="10" fill="#1f6ed4" stroke="#fff" stroke-width="2" paint-order="stroke" stroke-linejoin="round" textLength="44">W23DR-D</text>
</svg></body></html>
